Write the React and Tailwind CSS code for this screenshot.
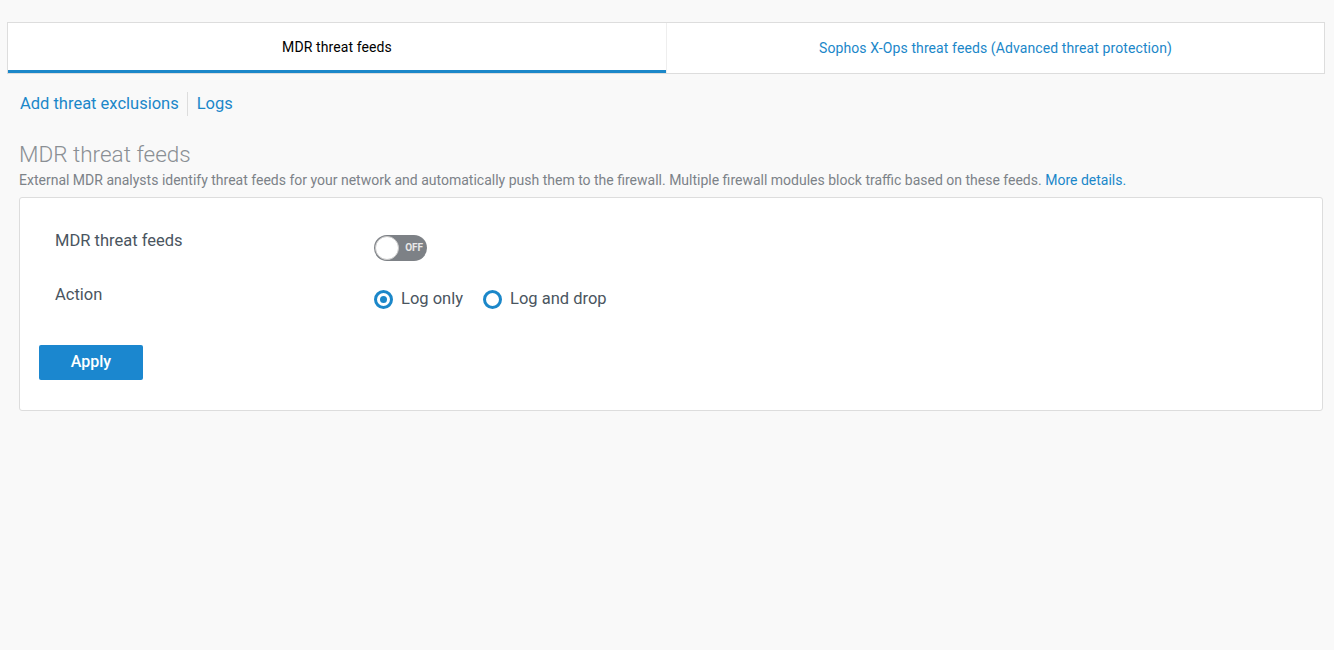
const App = () => {
    return (
        <div className="min-h-[650px] w-full bg-[#f9f9f9] pt-[22px]" style={{ fontFamily: 'Roboto, "Liberation Sans", sans-serif' }}>
            {/* tabs */}
            <div className="mx-[7px] w-[1318px] flex h-[52px] border border-[#dddddd] bg-white">
                <div className="w-[658px] flex items-center justify-center border-b-[3px] border-[#1b87c9] pt-[1px] text-[14px] text-black tracking-[0.1px]">
                    MDR threat feeds
                </div>
                <div className="flex-1 flex items-center justify-center border-l border-[#eeeeee] text-[14px] text-[#1b87c9] tracking-[0.1px]">
                    Sophos X-Ops threat feeds (Advanced threat protection)
                </div>
            </div>

            {/* links */}
            <div className="flex items-center mt-[18px] ml-[20px] text-[16.5px] text-[#1b87c9]">
                <span className="pr-[8px]">Add threat exclusions</span>
                <span className="h-[24px] border-l border-[#dddddd]"></span>
                <span className="pl-[9px]">Logs</span>
            </div>

            {/* section */}
            <div className="mx-[19px] mt-[23px]">
                <h2 className="text-[22.5px] leading-[28px] text-[#8a8f94] font-light">MDR threat feeds</h2>
                <p className="text-[14px] leading-[18px] mt-[3px] text-[#7c8288]">
                    External MDR analysts identify threat feeds for your network and automatically push them to the firewall. Multiple firewall modules block traffic based on these feeds.{' '}
                    <span className="text-[#1b87c9]">More details.</span>
                </p>

                <div className="mt-[8px] w-[1304px] h-[214px] bg-white border border-[#dddddd] rounded-[3px] pl-[35px] pt-[31px]">
                    <div className="flex">
                        <div className="w-[319px] text-[16.5px] text-[#4a5560]">MDR threat feeds</div>
                        <div className="mt-[6px] relative w-[53px] h-[26px] rounded-full bg-[#7d8186]">
                            <div className="absolute left-[1px] top-[1px] w-[24px] h-[24px] rounded-full bg-white border border-[#c8c8c8]"></div>
                            <span className="absolute right-[4px] top-[6px] text-[10px] leading-[14px] font-bold text-[#e8e8e8]">OFF</span>
                        </div>
                    </div>
                    <div className="flex mt-[22px]">
                        <div className="w-[319px] text-[16.5px] text-[#4a5560]">Action</div>
                        <div className="flex items-center mt-[4px] text-[16.5px] text-[#4a5560]">
                            <span className="w-[19px] h-[19px] rounded-full border-[3px] border-[#1b87c9] flex items-center justify-center">
                                <span className="w-[7px] h-[7px] rounded-full bg-[#1b87c9]"></span>
                            </span>
                            <span className="ml-[8px]">Log only</span>
                            <span className="ml-[20px] w-[19px] h-[19px] rounded-full border-[3px] border-[#1b87c9]"></span>
                            <span className="ml-[8px]">Log and drop</span>
                        </div>
                    </div>
                    <button className="mt-[33px] -ml-[16px] w-[104px] h-[35px] rounded-[2px] bg-[#1b87cf] text-white text-[16px] font-medium">
                        Apply
                    </button>
                </div>
            </div>
        </div>
    )
}

export default App
